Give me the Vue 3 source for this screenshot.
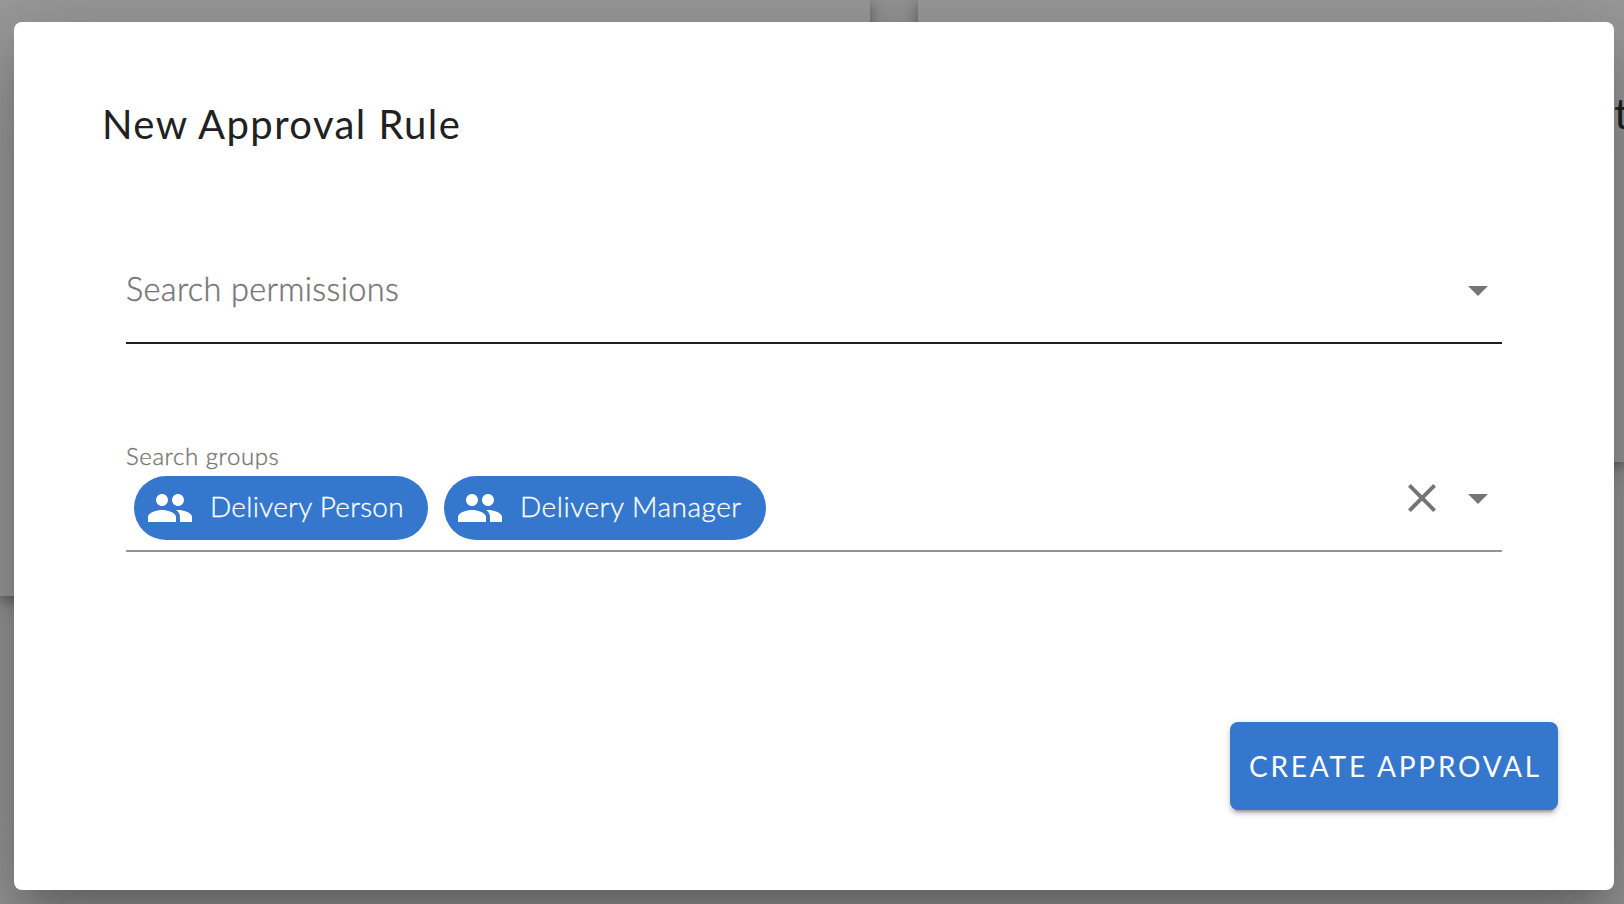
<script setup>
const groups = [
  { name: 'Delivery Person', kind: 'person' },
  { name: 'Delivery Manager', kind: 'manager' },
]
</script>

<template>
  <div class="page">
    <div class="backdrop">
      <div class="card card-left"></div>
      <div class="card card-right"><span class="card-title">t</span></div>
      <div class="scrim"></div>
    </div>

    <section class="dialog">
      <h1 class="title"><span>New Approval Rule</span></h1>

      <div class="field permissions">
        <span class="placeholder">Search permissions</span>
        <svg class="icon" viewBox="0 0 24 24"><path d="M7 10l5 5 5-5z" /></svg>
      </div>

      <div class="field groups">
        <div class="selection">
          <label class="label">Search groups</label>
          <div class="chips">
            <div v-for="g in groups" :key="g.name" class="chip" :class="g.kind">
              <svg class="people" viewBox="0 0 24 24">
                <path d="M16 11c1.66 0 2.99-1.34 2.99-3S17.66 5 16 5s-3 1.34-3 3 1.34 3 3 3zm-8 0c1.66 0 2.99-1.34 2.99-3S9.66 5 8 5 5 6.34 5 8s1.34 3 3 3zm0 2c-2.33 0-7 1.17-7 3.5V19h14v-2.5c0-2.33-4.67-3.5-7-3.5zm8 0c-.29 0-.62.02-.97.05 1.16.84 1.97 1.97 1.97 3.45V19h6v-2.5c0-2.33-4.67-3.5-7-3.5z" />
              </svg>
              <span class="chip-text">{{ g.name }}</span>
            </div>
          </div>
        </div>
        <div class="actions">
          <svg class="icon" viewBox="0 0 24 24">
            <path d="M19 6.41L17.59 5 12 10.59 6.41 5 5 6.41 10.59 12 5 17.59 6.41 19 12 13.41 17.59 19 19 17.59 13.41 12z" />
          </svg>
          <svg class="icon" viewBox="0 0 24 24"><path d="M7 10l5 5 5-5z" /></svg>
        </div>
      </div>

      <button class="create"><span>CREATE APPROVAL</span></button>
    </section>
  </div>
</template>

<style>
body {
  margin: 0;
  overflow: hidden;
}
</style>

<style scoped>
.page {
  position: relative;
  box-sizing: border-box;
  width: 1624px;
  height: 904px;
  padding: 22px 10px 14px 14px;
  overflow: hidden;
  font-family: Lato, "Noto Sans", sans-serif;
  background: #fafafa;
}
.backdrop,
.scrim {
  position: absolute;
  inset: 0;
}
.backdrop {
  display: grid;
  grid-template-columns: 870px 706px;
  column-gap: 48px;
  align-items: start;
}
.scrim {
  background: #212121;
  opacity: 0.46;
}
.card {
  background: #fff;
  box-shadow: 0 4px 10px rgba(0, 0, 0, 0.3), 0 6px 30px rgba(0, 0, 0, 0.25);
}
.card-left {
  height: 596px;
}
.card-right {
  box-sizing: border-box;
  height: 462px;
  padding: 89px 0 0 696px;
  overflow: hidden;
}
.card-title {
  font-size: 42px;
  line-height: 48px;
  color: #212121;
}
.dialog {
  position: relative;
  box-sizing: border-box;
  display: flex;
  flex-direction: column;
  height: 868px;
  padding: 76px 56px 80px 112px;
  border-radius: 8px;
  background: #fff;
  box-shadow: 0 22px 30px -14px rgba(0, 0, 0, 0.2), 0 48px 76px 6px rgba(0, 0, 0, 0.14), 0 18px 92px 16px rgba(0, 0, 0, 0.12);
}
.title {
  margin: 0 0 0 -24px;
  height: 64px;
  font-size: 40px;
  font-weight: 400;
  line-height: 53px;
  letter-spacing: 1.43px;
  color: #212121;
  white-space: nowrap;
}
.field {
  box-sizing: border-box;
  display: flex;
  justify-content: space-between;
  width: 1376px;
}
.permissions {
  height: 98px;
  margin-top: 84px;
  border-bottom: 2px solid #212121;
}
.permissions .icon {
  margin-top: 20px;
}
.placeholder {
  margin-top: 23px;
  font-size: 32.5px;
  font-weight: 300;
  line-height: 40px;
  letter-spacing: 0.34px;
  color: #757575;
  -webkit-text-stroke: 0.4px #757575;
  white-space: nowrap;
}
.icon {
  width: 48px;
  height: 48px;
  fill: #757575;
}
.groups {
  height: 112px;
  margin-top: 96px;
  border-bottom: 2px solid #949494;
}
.label {
  display: block;
  height: 36px;
  font-size: 24px;
  font-weight: 300;
  line-height: 32px;
  letter-spacing: 0.58px;
  color: #757575;
  -webkit-text-stroke: 0.35px #757575;
}
.chips {
  display: flex;
  gap: 16px;
  padding-left: 8px;
}
.chip {
  box-sizing: border-box;
  display: flex;
  align-items: center;
  height: 64px;
  padding-left: 12px;
  border-radius: 32px;
  background: #3577cc;
  color: #fff;
  font-size: 28px;
  font-weight: 300;
  white-space: nowrap;
}
.person {
  width: 294px;
  letter-spacing: 0.27px;
}
.manager {
  width: 322px;
  letter-spacing: 0.53px;
}
.people {
  flex: none;
  width: 48px;
  height: 48px;
  margin-right: 16px;
  fill: #fff;
}
.chip-text {
  padding-bottom: 4px;
  line-height: 34px;
  -webkit-text-stroke: 0.3px #fff;
}
.actions {
  display: flex;
  gap: 8px;
  padding-top: 34px;
}
.create {
  width: 328px;
  height: 88px;
  margin: auto 0 0;
  padding: 0 0 0 19px;
  align-self: flex-end;
  border: 0;
  border-radius: 8px;
  background: #3577cc;
  color: #fff;
  font-family: inherit;
  font-size: 28px;
  font-weight: 400;
  line-height: 36px;
  letter-spacing: 2.8px;
  text-align: left;
  white-space: nowrap;
  box-shadow: 0 6px 2px -4px rgba(0, 0, 0, 0.2), 0 4px 4px rgba(0, 0, 0, 0.14), 0 2px 10px rgba(0, 0, 0, 0.12);
}
</style>
